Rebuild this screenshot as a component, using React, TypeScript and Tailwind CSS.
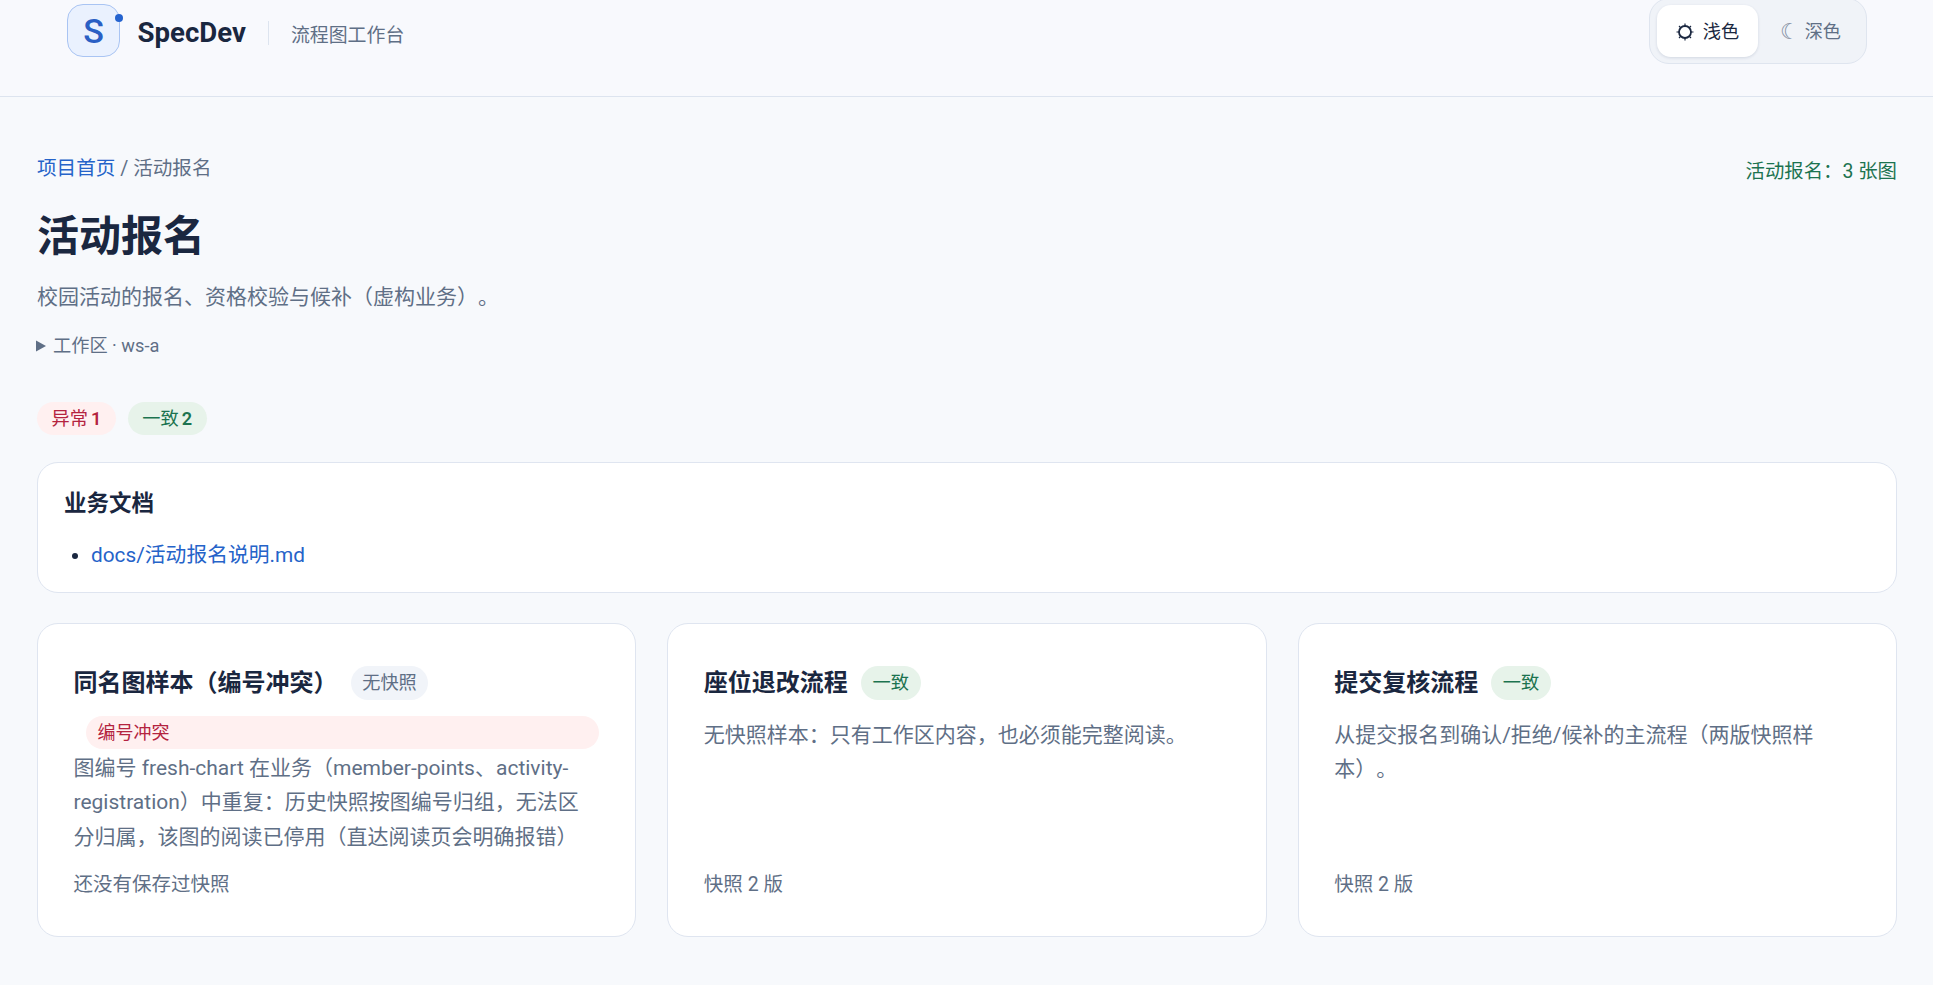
const fontStack = { fontFamily: 'Roboto, "Noto Sans CJK SC", sans-serif' }

function Badge({ tone, children }: { tone: "muted" | "ok"; children: React.ReactNode }) {
  const cls = tone === "ok" ? "bg-[#e7f3ea] text-[#1c7350]" : "bg-[#f1f4f9] text-[#5f6f86]"
  return <span className={`flex h-[34px] items-center rounded-full px-[11.7px] text-[18.2px] ${cls}`}>{children}</span>
}

function SunIcon() {
  return (
    <svg width="18" height="18" viewBox="0 0 18 18" fill="none" stroke="#1a2740">
      <circle cx="9" cy="9" r="6" strokeWidth="1.8" />
      <path
        d="M9 0.5V3M9 15V17.5M0.5 9H3M15 9H17.5M3 3L4.6 4.6M13.4 13.4L15 15M3 15L4.6 13.4M13.4 4.6L15 3"
        strokeWidth="1.2"
      />
    </svg>
  )
}

function Card({
  title,
  badge,
  conflict,
  desc,
  meta,
}: {
  title: string
  badge: React.ReactNode
  conflict?: string
  desc: string
  meta: string
}) {
  return (
    <div className="flex flex-col rounded-[21px] border border-[#dfe5f0] bg-white pt-[42px] pr-[36px] pb-[36px] pl-[35.5px]">
      <div className="flex items-center gap-[13px]">
        <h3 className="text-[24px] leading-[34px] font-bold text-[#1a2740]">{title}</h3>
        {badge}
      </div>
      {conflict && (
        <div className="mt-[16px] ml-[12px] flex h-[33px] items-center rounded-full bg-[#fff0f0] px-[12px] text-[18px] text-[#b4233f]">
          {conflict}
        </div>
      )}
      <p className={`${conflict ? "mt-[2px]" : "mt-[18px]"} text-[21px] leading-[34.3px] text-[#5f6f86]`}>{desc}</p>
      <div className="mt-auto pt-[16px] text-[19.5px] leading-[30px] text-[#5f6f86]">{meta}</div>
    </div>
  )
}

export default function App() {
  return (
    <div className="min-h-screen bg-[#f7f9fc] [text-spacing-trim:space-all]" style={fontStack}>
      <header className="flex h-[97px] justify-between overflow-hidden border-b border-[#dde4ef] bg-[#f8f9fd] pr-[66px] pl-[67px]">
        <div className="mt-[4px] flex h-[52px] items-center">
          <div className="relative flex h-[53px] w-[53px] items-center justify-center rounded-[16px] border border-[#a9c4f3] bg-[#eaf1fe] pt-[2px] text-[34px] font-medium text-[#2a5fc4]">
            S
            <span className="absolute top-[9px] -right-[4px] h-[8px] w-[8px] rounded-full bg-[#2563cf]" />
          </div>
          <span className="mt-[5px] ml-[17.5px] text-[27.6px] font-bold text-[#1a2740]">SpecDev</span>
          <span className="mx-[22px] mt-[5px] h-[24px] w-px bg-[#dde4ef]" />
          <span className="mt-[13px] text-[18.9px] text-[#5f6f86]">流程图工作台</span>
        </div>
        <div className="-mt-[2px] flex h-[66px] items-center rounded-[20px] border border-[#dfe5ef] bg-[#f0f3f8] px-[7px]">
          <button className="flex h-[52px] w-[101px] items-center justify-center gap-[9px] rounded-[14px] bg-white pt-[2px] text-[18.2px] text-[#1a2740] shadow-[0_1px_3px_rgba(30,50,90,0.14)]">
            <SunIcon />
            <span>浅色</span>
          </button>
          <button className="flex h-[52px] w-[101px] items-center justify-center gap-[5px] rounded-[14px] pt-[2px] pl-[4px] text-[18.2px] text-[#5f6f86]">
            <span className="text-[22px] leading-none text-[#8792a5]" style={{ fontFamily: '"DejaVu Sans", sans-serif' }}>☾</span>
            <span>深色</span>
          </button>
        </div>
      </header>

      <main className="pt-[57px] pr-[36px] pl-[37px]">
        <div className="flex items-start justify-between">
          <div className="text-[19.6px] leading-[30px] text-[#5f6f86]">
            <a className="text-[#2563c9]">项目首页</a> / 活动报名
          </div>
          <div className="mt-[3px] text-[19.4px] leading-[30px] text-[#1c7350]">活动报名：3 张图</div>
        </div>

        <h1 className="mt-[25px] text-[42px] leading-[50px] font-bold text-[#1a2740]">活动报名</h1>
        <p className="mt-[18px] text-[21px] leading-[34px] text-[#5f6f86]">校园活动的报名、资格校验与候补（虚构业务）。</p>

        <div className="mt-[18px] flex items-center text-[18.2px] leading-[28px] text-[#5f6f86]">
          <svg width="10" height="12" viewBox="0 0 10 12" className="mr-[7px] -ml-px">
            <path d="M0 0.5 L10 6 L0 11.5 Z" fill="#5f6f86" />
          </svg>
          工作区 · ws-a
        </div>

        <div className="mt-[42px] flex gap-[12px]">
          <span className="flex h-[33px] items-center gap-[3px] rounded-full bg-[#fff0f0] px-[14.5px] text-[18.2px] text-[#b4233f]">
            异常 <span className="font-semibold">1</span>
          </span>
          <span className="flex h-[33px] items-center gap-[3px] rounded-full bg-[#e7f3ea] px-[14.5px] text-[18.2px] text-[#1c7350]">
            一致 <span className="font-semibold">2</span>
          </span>
        </div>

        <section className="mt-[27px] h-[131px] rounded-[21px] border border-[#dfe5f0] bg-white px-[26px] pt-[24px]">
          <h2 className="text-[22.5px] leading-[32px] font-bold text-[#1a2740]">业务文档</h2>
          <ul className="mt-[19px] list-disc pl-[27px] text-[#1a2740]">
            <li className="text-[20.8px] leading-[34px]">
              <a className="text-[#2563c9]">docs/活动报名说明.md</a>
            </li>
          </ul>
        </section>

        <div className="mt-[30px] grid grid-cols-3 gap-[31px]">
          <Card
            title="同名图样本（编号冲突）"
            badge={<Badge tone="muted">无快照</Badge>}
            conflict="编号冲突"
            desc="图编号 fresh-chart 在业务（member-points、activity-registration）中重复：历史快照按图编号归组，无法区分归属，该图的阅读已停用（直达阅读页会明确报错）"
            meta="还没有保存过快照"
          />
          <Card
            title="座位退改流程"
            badge={<Badge tone="ok">一致</Badge>}
            desc="无快照样本：只有工作区内容，也必须能完整阅读。"
            meta="快照 2 版"
          />
          <Card
            title="提交复核流程"
            badge={<Badge tone="ok">一致</Badge>}
            desc="从提交报名到确认/拒绝/候补的主流程（两版快照样本）。"
            meta="快照 2 版"
          />
        </div>
      </main>
    </div>
  )
}
